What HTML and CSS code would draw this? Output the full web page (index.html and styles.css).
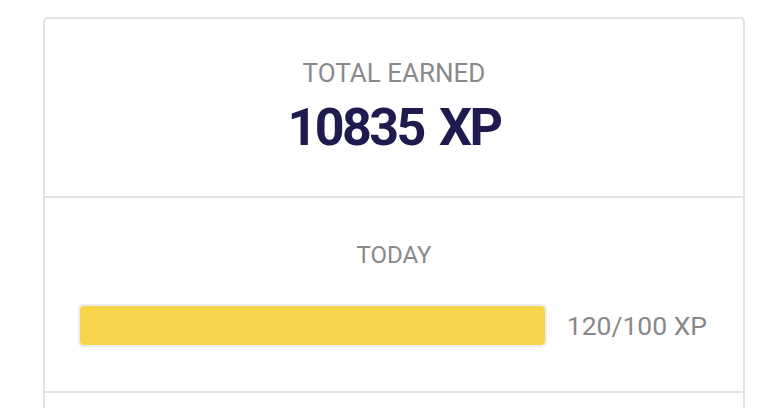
FILE: index.html
```html
<!DOCTYPE html>
<html>
<head>
<meta charset="utf-8">
<link rel="stylesheet" href="styles.css">
</head>
<body>
<div class="card">
  <section class="section total">
    <div class="label">TOTAL EARNED</div>
    <div class="value">10835 XP</div>
  </section>
  <section class="section today">
    <div class="label small">TODAY</div>
    <div class="progress-row">
      <div class="bar"><div class="fill" style="width:100%"></div></div>
      <div class="progress-text">120/100 XP</div>
    </div>
  </section>
  <section class="section rest"></section>
</div>
</body>
</html>
```
FILE: styles.css
```css
html, body {
  margin: 0;
  padding: 0;
  background: #ffffff;
  overflow: hidden;
}
body {
  font-family: Roboto, "Open Sans", sans-serif;
  padding: 17px 37px 0 43px;
}
.card {
  width: 698px;
  border: 2px solid #e2e2e2;
  border-radius: 5px;
  background: #fff;
}
.section {
  border-bottom: 2px solid #e2e2e2;
  text-align: center;
}
.total {
  height: 179px;
  box-sizing: border-box;
  padding-top: 38px;
}
.label {
  color: #8a8a8a;
  font-size: 26px;
  line-height: 32px;
}
.label.small {
  font-size: 24px;
}
.value {
  color: #1f1b4e;
  font-weight: 700;
  font-size: 52px;
  line-height: 56px;
  letter-spacing: -2.6px;
  word-spacing: 5px;
  margin-top: 11px;
}
.today {
  height: 195px;
  box-sizing: border-box;
  padding-top: 41px;
}
.progress-row {
  display: flex;
  align-items: center;
  gap: 20px;
  padding: 0 36px 0 33px;
  margin-top: 33px;
}
.bar {
  flex: 1;
  height: 39px;
  border: 2px solid #ededed;
  border-radius: 5px;
  background: #f3f3f3;
  overflow: hidden;
}
.fill {
  height: 100%;
  background: #f6d54a;
  border-radius: 4px;
}
.progress-text {
  color: #888888;
  font-size: 26.5px;
  line-height: 34px;
}
.rest {
  height: 60px;
  border-bottom: none;
}
```
